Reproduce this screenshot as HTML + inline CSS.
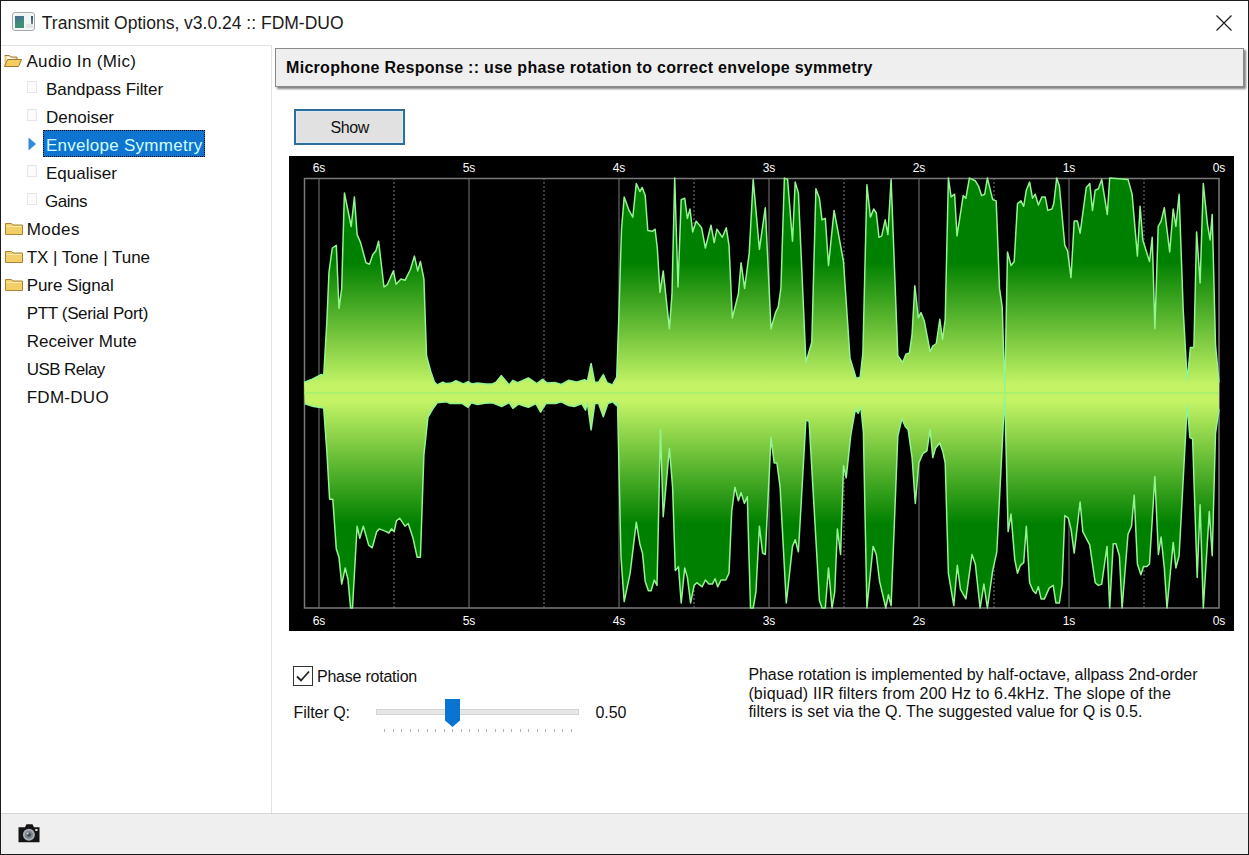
<!DOCTYPE html>
<html><head><meta charset="utf-8">
<style>
*{margin:0;padding:0;box-sizing:border-box}
html,body{width:1249px;height:855px;overflow:hidden;background:#fff;font-family:"Liberation Sans",sans-serif;color:#000}
.abs{position:absolute}
.t{position:absolute;white-space:nowrap;line-height:1}
</style></head><body>
<div class="abs" style="left:0;top:0;width:1249px;height:855px;border:1px solid #1c1c1c"></div>
<div class="abs" style="left:12px;top:12px;width:23px;height:19px;border:1px solid #a8a8a8;border-radius:3px;background:#f2f6f6"></div>
<div class="abs" style="left:15px;top:16px;width:9px;height:12px;background:linear-gradient(160deg,#4a6696,#3c9078 60%,#4a8a78)"></div>
<div class="abs" style="left:26px;top:24px;width:7px;height:4px;background:#e2e4e4"></div>
<div class="abs" style="left:31px;top:16px;width:2px;height:8px;background:linear-gradient(#3c4c58,#7a8a90)"></div>
<div class="t" style="left:41.8px;top:14.69px;font-size:17.5px;color:#1a1a1a;">Transmit Options, v3.0.24 :: FDM-DUO</div>
<svg class="abs" style="left:1214px;top:13px" width="20" height="20"><path d="M2.5 2.5L17.5 17.5M17.5 2.5L2.5 17.5" stroke="#1e1e1e" stroke-width="1.2"/></svg>
<div class="abs" style="left:1px;top:45px;width:271px;height:1px;background:#e2e2e2"></div>
<div class="abs" style="left:271px;top:45px;width:1px;height:768px;background:#e2e2e2"></div>
<svg class="abs" style="left:4px;top:54px" width="18" height="13" viewBox="0 0 18 13"><path d="M0.5 1.5h5l1.5 1.5h6v2.5" fill="#f0d890" stroke="#a08040" stroke-width="1"/><path d="M0.5 12.5V2h2v10.5z" fill="#e8c870"/><path d="M0.5 12.5L3.5 5.5h14l-3 7z" fill="#f4cc60" stroke="#a07830" stroke-width="1"/></svg>
<div class="t" style="left:26.4px;top:52.61px;font-size:17px;color:#111;letter-spacing:0.366px;">Audio In (Mic)</div>
<div class="abs" style="left:27px;top:81px;width:10px;height:12px;border:1px solid #e6e6e6;background:#fcfcfc"></div>
<div class="t" style="left:46px;top:80.61px;font-size:17px;color:#111;letter-spacing:-0.075px;">Bandpass Filter</div>
<div class="abs" style="left:27px;top:109px;width:10px;height:12px;border:1px solid #e6e6e6;background:#fcfcfc"></div>
<div class="t" style="left:46px;top:108.61px;font-size:17px;color:#111;">Denoiser</div>
<div class="abs" style="left:43px;top:130px;width:162px;height:27px;background:#0f73d0;border:1px dotted #000"></div>
<svg class="abs" style="left:28px;top:137px" width="9" height="14"><path d="M0.5 0.5L8 7L0.5 13.5z" fill="#2f8bdc"/></svg>
<div class="t" style="left:46px;top:136.61px;font-size:17px;color:#d0ffff;letter-spacing:0.264px;">Envelope Symmetry</div>
<div class="abs" style="left:27px;top:165px;width:10px;height:12px;border:1px solid #e6e6e6;background:#fcfcfc"></div>
<div class="t" style="left:46px;top:164.61px;font-size:17px;color:#111;">Equaliser</div>
<div class="abs" style="left:27px;top:193px;width:10px;height:12px;border:1px solid #e6e6e6;background:#fcfcfc"></div>
<div class="t" style="left:45px;top:192.61px;font-size:17px;color:#111;letter-spacing:-0.484px;">Gains</div>
<svg class="abs" style="left:5px;top:222px" width="18" height="13" viewBox="0 0 18 13"><path d="M0.5 12.5V1.5h6l1.5 1.5h9.5v9.5z" fill="#f2cf68" stroke="#a88434" stroke-width="1"/><path d="M1.5 4.5h15" stroke="#fbeab0" stroke-width="1"/></svg>
<div class="t" style="left:26.7px;top:220.61px;font-size:17px;color:#111;letter-spacing:0.454px;">Modes</div>
<svg class="abs" style="left:5px;top:250px" width="18" height="13" viewBox="0 0 18 13"><path d="M0.5 12.5V1.5h6l1.5 1.5h9.5v9.5z" fill="#f2cf68" stroke="#a88434" stroke-width="1"/><path d="M1.5 4.5h15" stroke="#fbeab0" stroke-width="1"/></svg>
<div class="t" style="left:26.7px;top:248.61px;font-size:17px;color:#111;letter-spacing:-0.033px;">TX | Tone | Tune</div>
<svg class="abs" style="left:5px;top:278px" width="18" height="13" viewBox="0 0 18 13"><path d="M0.5 12.5V1.5h6l1.5 1.5h9.5v9.5z" fill="#f2cf68" stroke="#a88434" stroke-width="1"/><path d="M1.5 4.5h15" stroke="#fbeab0" stroke-width="1"/></svg>
<div class="t" style="left:26.7px;top:276.61px;font-size:17px;color:#111;letter-spacing:-0.081px;">Pure Signal</div>
<div class="t" style="left:26.7px;top:304.61px;font-size:17px;color:#111;letter-spacing:-0.348px;">PTT (Serial Port)</div>
<div class="t" style="left:26.7px;top:332.61px;font-size:17px;color:#111;letter-spacing:0.030px;">Receiver Mute</div>
<div class="t" style="left:26.7px;top:360.61px;font-size:17px;color:#111;letter-spacing:-0.571px;">USB Relay</div>
<div class="t" style="left:26.7px;top:388.61px;font-size:17px;color:#111;letter-spacing:0.276px;">FDM-DUO</div>
<div class="abs" style="left:1px;top:813px;width:1247px;height:41px;background:#efefef;border-top:1px solid #d6d6d6"></div>
<svg class="abs" style="left:17px;top:823px" width="24" height="21" viewBox="0 0 24 21"><path d="M1.5 4.3h6.5l1.5-3h6l1.5 3h5.5v15H1.5z" fill="#151515"/><circle cx="11.9" cy="11.7" r="6" fill="#a9adb1"/><circle cx="11.9" cy="11.7" r="4" fill="#7c858c"/><circle cx="11.9" cy="11.7" r="2" fill="#3e4850"/><circle cx="10.6" cy="10.4" r="1" fill="#d8e0e8"/><rect x="18.3" y="6" width="2.2" height="2" fill="#e8e8e8"/></svg>
<div class="abs" style="left:275px;top:48px;width:969px;height:39px;background:#efefef;border:1px solid #8a8a8a;box-shadow:2px 2px 2px rgba(0,0,0,0.5)"></div>
<div class="t" style="left:286px;top:60.16px;font-size:16px;color:#0a0a0a;font-weight:bold;letter-spacing:0.303px;">Microphone Response :: use phase rotation to correct envelope symmetry</div>
<div class="abs" style="left:294px;top:109px;width:111px;height:36px;border:2px solid #2f6d98;background:#e1e1e1;box-shadow:inset 0 0 0 1px #d6ecfb"></div>
<div class="t" style="left:330.4px;top:120.46px;font-size:16px;color:#111;letter-spacing:-0.357px;">Show</div>
<svg class="abs" style="left:289px;top:156px" width="945" height="475" viewBox="289 156 945 475">
<defs><linearGradient id="g" gradientUnits="userSpaceOnUse" x1="0" y1="178" x2="0" y2="608"><stop offset="0.0000" stop-color="#008000"/><stop offset="0.1953" stop-color="#008000"/><stop offset="0.4814" stop-color="#c4f466"/><stop offset="0.5186" stop-color="#c4f466"/><stop offset="0.8047" stop-color="#008000"/><stop offset="1.0000" stop-color="#008000"/></linearGradient></defs>
<rect x="289" y="156" width="945" height="475" fill="#000"/>
<line x1="319" y1="178" x2="319" y2="608" stroke="#5e5e5e" stroke-width="1.3"/><line x1="469" y1="178" x2="469" y2="608" stroke="#5e5e5e" stroke-width="1.3"/><line x1="619" y1="178" x2="619" y2="608" stroke="#5e5e5e" stroke-width="1.3"/><line x1="769" y1="178" x2="769" y2="608" stroke="#5e5e5e" stroke-width="1.3"/><line x1="919" y1="178" x2="919" y2="608" stroke="#5e5e5e" stroke-width="1.3"/><line x1="1069" y1="178" x2="1069" y2="608" stroke="#5e5e5e" stroke-width="1.3"/><line x1="394" y1="178" x2="394" y2="608" stroke="#5e5e5e" stroke-width="1.3" stroke-dasharray="2 2"/><line x1="544" y1="178" x2="544" y2="608" stroke="#5e5e5e" stroke-width="1.3" stroke-dasharray="2 2"/><line x1="694" y1="178" x2="694" y2="608" stroke="#5e5e5e" stroke-width="1.3" stroke-dasharray="2 2"/><line x1="844" y1="178" x2="844" y2="608" stroke="#5e5e5e" stroke-width="1.3" stroke-dasharray="2 2"/><line x1="994" y1="178" x2="994" y2="608" stroke="#5e5e5e" stroke-width="1.3" stroke-dasharray="2 2"/><line x1="1144" y1="178" x2="1144" y2="608" stroke="#5e5e5e" stroke-width="1.3" stroke-dasharray="2 2"/>
<rect x="304.5" y="178.5" width="914.5" height="429.5" fill="none" stroke="#7a7a7a" stroke-width="1.5"/>
<path d="M304 382.5 L310.8 379.8 L321.5 374.5 L323.7 375.8 L326.9 320.7 L329 272 L332.3 248 L336.3 245.3 L339 308.5 L341.7 288.4 L344.4 192.9 L351.2 226.5 L354.4 196.9 L357.1 234.6 L360.6 242.6 L366 262.8 L369.5 264.2 L372.7 254.7 L375.9 250.7 L378.6 241.3 L384 287 L387.5 284.3 L393.4 270.9 L396.1 284.3 L401 279 L405 280.3 L410.4 269.5 L414.4 256.1 L417.7 270.9 L420.4 261.5 L423.9 279 L426.5 355.6 L430.6 370.9 L434.4 382.1 L437.2 384.9 L442.8 382.1 L445.6 383.5 L451.2 383.1 L455.9 380.7 L463.4 384 L468 381.7 L471.8 384 L477.4 383.1 L485.8 384 L492.4 384 L496.1 382.1 L501.2 375.6 L509.2 384.9 L512.9 380.3 L517.6 382.6 L522.3 380.7 L528.4 377.9 L536.8 383.5 L542.5 379.3 L547.1 383.1 L555.5 382.6 L561.2 384.5 L568.6 380.3 L576.1 382.1 L584.5 379.8 L587.4 381.2 L591.1 363.4 L594.8 382.6 L598.6 382.1 L603.3 374.6 L607 382.6 L612.6 384.9 L616.7 377.2 L618.8 318 L621.5 229.2 L624.2 196.9 L629 210.4 L632.8 217.1 L636.3 183.5 L639.8 191.5 L642.2 187.5 L645.2 195.6 L647.8 230.5 L652.4 231.3 L655.1 229.2 L657.3 248 L660 292.4 L663.2 270.9 L669.4 328.7 L672 293.8 L674.7 178.1 L678 287 L681.2 199.6 L684.7 198.2 L687.4 218.4 L690 209 L692.7 231.9 L696.2 221.1 L701.6 227.8 L705.4 248 L711 225.2 L714.2 242.6 L716.9 229.2 L722.3 237.3 L726.3 227.8 L729 245.3 L732.3 318 L738.4 293.8 L741.1 262.8 L744.6 288.4 L749.2 253.4 L753.2 179.4 L759.4 249.4 L765.3 207.7 L771 328.7 L775.5 312.6 L778.2 307.2 L780.9 288.4 L784.4 178.1 L787.6 179.4 L792.5 241.3 L795.2 182.1 L798.4 192.9 L805.9 362.4 L811.8 342.2 L815.9 188.8 L819.4 198.2 L822 219.8 L825.3 218.4 L828.5 265.5 L834.1 210.4 L843.5 261.5 L850 358.3 L856.2 378.5 L860.2 377.2 L862.9 353 L866.9 184.8 L870.4 217.1 L873.7 209 L876.3 213 L879 237.3 L881.7 235.9 L885.2 219.8 L887.9 234.6 L891.1 179.4 L897.8 355.6 L902.7 362.4 L905.9 354.3 L909.4 353 L912.1 334.1 L914.8 285.7 L918.3 318 L921 312.6 L924.2 320.7 L930.1 351.6 L932.8 346.2 L936.3 343.5 L939.8 319.3 L942.5 339.5 L945.2 319.3 L948.4 178.1 L951.1 196.9 L954.6 194.2 L957 235.9 L963.2 195.6 L965.9 198.2 L969.4 178.1 L975.3 180.8 L978.5 186.1 L981.5 195.6 L984.7 194.2 L987.4 178.1 L992.7 199.6 L996.2 200.9 L999.5 288.4 L1002.2 307.2 L1004.8 392 L1007.5 252 L1011 265.5 L1014.2 261.5 L1017.5 203.6 L1021 200.9 L1023.7 206.3 L1026.3 190.2 L1029.6 182.1 L1032.5 198.2 L1035.2 194.2 L1038.4 205 L1041.9 196.9 L1045.2 196.9 L1047.8 210.4 L1051.9 209 L1053.8 203.6 L1056.7 178.1 L1059.4 186.1 L1064.8 245.3 L1067.5 250.7 L1071 277.6 L1074.2 221.1 L1077.4 221.1 L1080.1 233.2 L1086.3 187.5 L1089.8 183.5 L1092.5 210.4 L1095.2 190.2 L1098.4 188.8 L1101.7 179.4 L1107.3 214.4 L1109.7 178.1 L1128 179.4 L1132.1 194.2 L1137.4 256.1 L1140.1 206.3 L1142.8 240 L1149.5 261.5 L1152.2 237.3 L1154.9 328.7 L1158.2 226.5 L1161.1 221.1 L1164.3 207.7 L1169.7 252 L1173.2 209 L1175.9 226.5 L1179.1 194.2 L1183.2 309.9 L1187.2 381 L1190.4 347.6 L1193.9 347.6 L1196.6 231.9 L1200.1 283 L1203.3 183.5 L1207.4 223.8 L1210.1 240 L1212.2 214.4 L1215.5 344.9 L1219 382.5 L1219 409.2 L1215.5 433.4 L1212.2 555.8 L1209.3 511.4 L1203.3 608 L1200.1 504.7 L1197.2 577.4 L1192.6 438.9 L1189.9 437.5 L1187.2 405 L1179.1 555.8 L1175.9 567.9 L1173.2 542.4 L1167 608 L1164.3 567.9 L1161.1 537 L1158.4 554.5 L1154.9 476.5 L1149.5 563.9 L1146.9 566.6 L1143.6 566.6 L1140.9 574.7 L1137.4 563.9 L1134.2 495.3 L1131.5 526.2 L1128 534.3 L1122.1 608 L1119.4 555.8 L1115.9 543.7 L1113.2 543.7 L1109.7 608 L1107 546.4 L1101.7 584.1 L1098.4 585.4 L1095.2 582.7 L1089.8 545.1 L1086.3 538.3 L1082.8 531.6 L1080.1 502 L1074.2 553.1 L1071 528.9 L1068.3 518.2 L1064.8 515.5 L1062.1 584.1 L1059.4 602.9 L1055.9 602.9 L1053.2 585.4 L1049.2 588.1 L1044.4 598.9 L1041.1 598.9 L1038.4 586.8 L1035.8 593.5 L1033.1 590.8 L1029.6 582.7 L1026.3 526.2 L1023.7 562.6 L1020.4 565.3 L1017.5 573.3 L1014.8 559.9 L1011 514.1 L1008.1 531.6 L1004.8 394 L996.8 551.8 L992.7 570.6 L987.4 608 L983.9 584.1 L980.1 608 L975.3 563.9 L972 554.5 L965.9 598.9 L960.5 589.5 L957.3 565.3 L953.8 605.6 L948.4 573.3 L945.2 463 L943 452.3 L939.8 442.8 L935.5 448.2 L932.8 457.6 L930.1 429.4 L926.9 450.9 L922.8 453.6 L918.8 463 L915.3 503.4 L912.1 457.6 L908.1 429.4 L905.4 426.7 L901.9 418.6 L897.8 436.1 L891.1 605.6 L888.4 594.8 L885.8 608 L879.6 581.4 L876.3 554.5 L873.1 546.4 L866.9 608 L863.4 432.1 L860.8 406.5 L858.3 413.2 L855.4 409.2 L850.8 434.8 L846.2 477.8 L843.5 465.7 L840.6 554.5 L837.4 528.9 L834.7 592.2 L832 608 L828.5 567.9 L825.3 608 L822 608 L819.4 600.2 L809.1 421.3 L805.9 420 L798.4 551.8 L795.2 539.7 L792.5 546.4 L786.3 602.9 L780.1 487.2 L776.9 463 L774.2 463 L771 437.5 L765.3 554.5 L762.6 553.1 L759.4 526.2 L755.9 592.2 L753.2 608 L750.5 608 L747.3 496.7 L744.4 503.4 L741.1 492.6 L738.4 500.7 L734.9 487.2 L731.7 511.4 L729 573.3 L725.8 580 L721 580 L717.7 586.8 L715.1 578.7 L712.4 584.1 L708.9 584.1 L705.4 580 L702.2 586.8 L696.8 582.7 L694.1 585.4 L690.6 602.9 L687.4 577.4 L684.7 568 L681.2 602.9 L678.5 566.6 L675.3 570.6 L672.6 487.2 L669.4 448.2 L663.2 516.8 L660.5 429.4 L657 585.4 L654.3 580 L651.1 590.8 L648.4 590.8 L645.2 581.4 L642.5 553.1 L639.8 543.7 L636.3 522.2 L630.1 573.3 L624.2 601.6 L621 557.2 L617.5 402.5 L616.4 405.5 L612.6 401.8 L607.9 403.6 L603.3 416.7 L598.6 403.6 L594.8 403.6 L591.1 429.8 L587.4 402.7 L585.5 410.2 L581.7 403.6 L574.3 406.5 L568.6 405.5 L561.2 401.8 L555.5 403.6 L546.2 403.2 L540.6 412.1 L535.9 403.6 L528.4 407.4 L524.2 406 L518.5 404.1 L512.9 408.3 L509.2 402.7 L501.7 406.5 L492.4 402.7 L484.9 403.2 L477.4 404.6 L471.3 402.7 L468 407.4 L462.4 403.6 L450.3 403.6 L446.5 401.8 L437.2 402.7 L432.5 409.3 L427.9 417.3 L423.9 455 L420.4 557.2 L417.1 557.2 L413.1 538.3 L408.2 523.5 L405 526.2 L399.6 518.2 L396.4 520.9 L394.2 531.6 L391.5 528.9 L388.9 533 L386.2 531.6 L379.4 528.9 L376.7 531.6 L372.2 547.8 L368.7 545.1 L363.3 526.2 L359.8 538.3 L357.1 526.2 L352.5 608 L350.6 608 L347.9 578.7 L345.2 568 L341.7 584.1 L339 557.2 L336.3 549.1 L332.8 499.3 L329.6 499.3 L326.9 452.3 L323.7 407.9 L313.5 406.5 L304.8 403.8Z" fill="url(#g)"/>
<path d="M304 382.5 L310.8 379.8 L321.5 374.5 L323.7 375.8 L326.9 320.7 L329 272 L332.3 248 L336.3 245.3 L339 308.5 L341.7 288.4 L344.4 192.9 L351.2 226.5 L354.4 196.9 L357.1 234.6 L360.6 242.6 L366 262.8 L369.5 264.2 L372.7 254.7 L375.9 250.7 L378.6 241.3 L384 287 L387.5 284.3 L393.4 270.9 L396.1 284.3 L401 279 L405 280.3 L410.4 269.5 L414.4 256.1 L417.7 270.9 L420.4 261.5 L423.9 279 L426.5 355.6 L430.6 370.9 L434.4 382.1 L437.2 384.9 L442.8 382.1 L445.6 383.5 L451.2 383.1 L455.9 380.7 L463.4 384 L468 381.7 L471.8 384 L477.4 383.1 L485.8 384 L492.4 384 L496.1 382.1 L501.2 375.6 L509.2 384.9 L512.9 380.3 L517.6 382.6 L522.3 380.7 L528.4 377.9 L536.8 383.5 L542.5 379.3 L547.1 383.1 L555.5 382.6 L561.2 384.5 L568.6 380.3 L576.1 382.1 L584.5 379.8 L587.4 381.2 L591.1 363.4 L594.8 382.6 L598.6 382.1 L603.3 374.6 L607 382.6 L612.6 384.9 L616.7 377.2 L618.8 318 L621.5 229.2 L624.2 196.9 L629 210.4 L632.8 217.1 L636.3 183.5 L639.8 191.5 L642.2 187.5 L645.2 195.6 L647.8 230.5 L652.4 231.3 L655.1 229.2 L657.3 248 L660 292.4 L663.2 270.9 L669.4 328.7 L672 293.8 L674.7 178.1 L678 287 L681.2 199.6 L684.7 198.2 L687.4 218.4 L690 209 L692.7 231.9 L696.2 221.1 L701.6 227.8 L705.4 248 L711 225.2 L714.2 242.6 L716.9 229.2 L722.3 237.3 L726.3 227.8 L729 245.3 L732.3 318 L738.4 293.8 L741.1 262.8 L744.6 288.4 L749.2 253.4 L753.2 179.4 L759.4 249.4 L765.3 207.7 L771 328.7 L775.5 312.6 L778.2 307.2 L780.9 288.4 L784.4 178.1 L787.6 179.4 L792.5 241.3 L795.2 182.1 L798.4 192.9 L805.9 362.4 L811.8 342.2 L815.9 188.8 L819.4 198.2 L822 219.8 L825.3 218.4 L828.5 265.5 L834.1 210.4 L843.5 261.5 L850 358.3 L856.2 378.5 L860.2 377.2 L862.9 353 L866.9 184.8 L870.4 217.1 L873.7 209 L876.3 213 L879 237.3 L881.7 235.9 L885.2 219.8 L887.9 234.6 L891.1 179.4 L897.8 355.6 L902.7 362.4 L905.9 354.3 L909.4 353 L912.1 334.1 L914.8 285.7 L918.3 318 L921 312.6 L924.2 320.7 L930.1 351.6 L932.8 346.2 L936.3 343.5 L939.8 319.3 L942.5 339.5 L945.2 319.3 L948.4 178.1 L951.1 196.9 L954.6 194.2 L957 235.9 L963.2 195.6 L965.9 198.2 L969.4 178.1 L975.3 180.8 L978.5 186.1 L981.5 195.6 L984.7 194.2 L987.4 178.1 L992.7 199.6 L996.2 200.9 L999.5 288.4 L1002.2 307.2 L1004.8 392 L1007.5 252 L1011 265.5 L1014.2 261.5 L1017.5 203.6 L1021 200.9 L1023.7 206.3 L1026.3 190.2 L1029.6 182.1 L1032.5 198.2 L1035.2 194.2 L1038.4 205 L1041.9 196.9 L1045.2 196.9 L1047.8 210.4 L1051.9 209 L1053.8 203.6 L1056.7 178.1 L1059.4 186.1 L1064.8 245.3 L1067.5 250.7 L1071 277.6 L1074.2 221.1 L1077.4 221.1 L1080.1 233.2 L1086.3 187.5 L1089.8 183.5 L1092.5 210.4 L1095.2 190.2 L1098.4 188.8 L1101.7 179.4 L1107.3 214.4 L1109.7 178.1 L1128 179.4 L1132.1 194.2 L1137.4 256.1 L1140.1 206.3 L1142.8 240 L1149.5 261.5 L1152.2 237.3 L1154.9 328.7 L1158.2 226.5 L1161.1 221.1 L1164.3 207.7 L1169.7 252 L1173.2 209 L1175.9 226.5 L1179.1 194.2 L1183.2 309.9 L1187.2 381 L1190.4 347.6 L1193.9 347.6 L1196.6 231.9 L1200.1 283 L1203.3 183.5 L1207.4 223.8 L1210.1 240 L1212.2 214.4 L1215.5 344.9 L1219 382.5" fill="none" stroke="#94f490" stroke-width="1.5" stroke-linejoin="round"/>
<path d="M304.8 403.8 L313.5 406.5 L323.7 407.9 L326.9 452.3 L329.6 499.3 L332.8 499.3 L336.3 549.1 L339 557.2 L341.7 584.1 L345.2 568 L347.9 578.7 L350.6 608 L352.5 608 L357.1 526.2 L359.8 538.3 L363.3 526.2 L368.7 545.1 L372.2 547.8 L376.7 531.6 L379.4 528.9 L386.2 531.6 L388.9 533 L391.5 528.9 L394.2 531.6 L396.4 520.9 L399.6 518.2 L405 526.2 L408.2 523.5 L413.1 538.3 L417.1 557.2 L420.4 557.2 L423.9 455 L427.9 417.3 L432.5 409.3 L437.2 402.7 L446.5 401.8 L450.3 403.6 L462.4 403.6 L468 407.4 L471.3 402.7 L477.4 404.6 L484.9 403.2 L492.4 402.7 L501.7 406.5 L509.2 402.7 L512.9 408.3 L518.5 404.1 L524.2 406 L528.4 407.4 L535.9 403.6 L540.6 412.1 L546.2 403.2 L555.5 403.6 L561.2 401.8 L568.6 405.5 L574.3 406.5 L581.7 403.6 L585.5 410.2 L587.4 402.7 L591.1 429.8 L594.8 403.6 L598.6 403.6 L603.3 416.7 L607.9 403.6 L612.6 401.8 L616.4 405.5 L617.5 402.5 L621 557.2 L624.2 601.6 L630.1 573.3 L636.3 522.2 L639.8 543.7 L642.5 553.1 L645.2 581.4 L648.4 590.8 L651.1 590.8 L654.3 580 L657 585.4 L660.5 429.4 L663.2 516.8 L669.4 448.2 L672.6 487.2 L675.3 570.6 L678.5 566.6 L681.2 602.9 L684.7 568 L687.4 577.4 L690.6 602.9 L694.1 585.4 L696.8 582.7 L702.2 586.8 L705.4 580 L708.9 584.1 L712.4 584.1 L715.1 578.7 L717.7 586.8 L721 580 L725.8 580 L729 573.3 L731.7 511.4 L734.9 487.2 L738.4 500.7 L741.1 492.6 L744.4 503.4 L747.3 496.7 L750.5 608 L753.2 608 L755.9 592.2 L759.4 526.2 L762.6 553.1 L765.3 554.5 L771 437.5 L774.2 463 L776.9 463 L780.1 487.2 L786.3 602.9 L792.5 546.4 L795.2 539.7 L798.4 551.8 L805.9 420 L809.1 421.3 L819.4 600.2 L822 608 L825.3 608 L828.5 567.9 L832 608 L834.7 592.2 L837.4 528.9 L840.6 554.5 L843.5 465.7 L846.2 477.8 L850.8 434.8 L855.4 409.2 L858.3 413.2 L860.8 406.5 L863.4 432.1 L866.9 608 L873.1 546.4 L876.3 554.5 L879.6 581.4 L885.8 608 L888.4 594.8 L891.1 605.6 L897.8 436.1 L901.9 418.6 L905.4 426.7 L908.1 429.4 L912.1 457.6 L915.3 503.4 L918.8 463 L922.8 453.6 L926.9 450.9 L930.1 429.4 L932.8 457.6 L935.5 448.2 L939.8 442.8 L943 452.3 L945.2 463 L948.4 573.3 L953.8 605.6 L957.3 565.3 L960.5 589.5 L965.9 598.9 L972 554.5 L975.3 563.9 L980.1 608 L983.9 584.1 L987.4 608 L992.7 570.6 L996.8 551.8 L1004.8 394 L1008.1 531.6 L1011 514.1 L1014.8 559.9 L1017.5 573.3 L1020.4 565.3 L1023.7 562.6 L1026.3 526.2 L1029.6 582.7 L1033.1 590.8 L1035.8 593.5 L1038.4 586.8 L1041.1 598.9 L1044.4 598.9 L1049.2 588.1 L1053.2 585.4 L1055.9 602.9 L1059.4 602.9 L1062.1 584.1 L1064.8 515.5 L1068.3 518.2 L1071 528.9 L1074.2 553.1 L1080.1 502 L1082.8 531.6 L1086.3 538.3 L1089.8 545.1 L1095.2 582.7 L1098.4 585.4 L1101.7 584.1 L1107 546.4 L1109.7 608 L1113.2 543.7 L1115.9 543.7 L1119.4 555.8 L1122.1 608 L1128 534.3 L1131.5 526.2 L1134.2 495.3 L1137.4 563.9 L1140.9 574.7 L1143.6 566.6 L1146.9 566.6 L1149.5 563.9 L1154.9 476.5 L1158.4 554.5 L1161.1 537 L1164.3 567.9 L1167 608 L1173.2 542.4 L1175.9 567.9 L1179.1 555.8 L1187.2 405 L1189.9 437.5 L1192.6 438.9 L1197.2 577.4 L1200.1 504.7 L1203.3 608 L1209.3 511.4 L1212.2 555.8 L1215.5 433.4 L1219 409.2" fill="none" stroke="#94f490" stroke-width="1.5" stroke-linejoin="round"/>
<line x1="304" y1="393" x2="1219" y2="393" stroke="#a0f070" stroke-width="1.6"/>
<g font-family="Liberation Sans, sans-serif" font-size="12" fill="#fff"><text x="319" y="172" text-anchor="middle">6s</text><text x="319" y="625" text-anchor="middle">6s</text><text x="469" y="172" text-anchor="middle">5s</text><text x="469" y="625" text-anchor="middle">5s</text><text x="619" y="172" text-anchor="middle">4s</text><text x="619" y="625" text-anchor="middle">4s</text><text x="769" y="172" text-anchor="middle">3s</text><text x="769" y="625" text-anchor="middle">3s</text><text x="919" y="172" text-anchor="middle">2s</text><text x="919" y="625" text-anchor="middle">2s</text><text x="1069" y="172" text-anchor="middle">1s</text><text x="1069" y="625" text-anchor="middle">1s</text><text x="1219" y="172" text-anchor="middle">0s</text><text x="1219" y="625" text-anchor="middle">0s</text></g>
</svg>
<div class="abs" style="left:293px;top:666px;width:20px;height:20px;border:1px solid #333;background:#fff"></div>
<svg class="abs" style="left:293px;top:666px" width="20" height="20"><path d="M4 10.5L8 14.5L16 5.5" fill="none" stroke="#222" stroke-width="1.8"/></svg>
<div class="t" style="left:317px;top:669.46px;font-size:16px;color:#111;letter-spacing:-0.228px;">Phase rotation</div>
<div class="t" style="left:293.4px;top:705.46px;font-size:16px;color:#111;letter-spacing:-0.032px;">Filter Q:</div>
<div class="abs" style="left:376px;top:709px;width:203px;height:6px;background:#e7e7e7;border:1px solid #d4d4d4"></div>
<svg class="abs" style="left:444px;top:698px" width="18" height="30"><path d="M1 1h15v21.5l-7.5 6.5l-7.5-6.5z" fill="#0a74d2"/></svg>
<svg class="abs" style="left:0;top:0" width="1249" height="855"><rect x="384" y="729" width="1" height="3" fill="#b4b4b4"/><rect x="393" y="729" width="1" height="3" fill="#b4b4b4"/><rect x="401" y="729" width="1" height="3" fill="#b4b4b4"/><rect x="410" y="729" width="1" height="3" fill="#b4b4b4"/><rect x="418" y="729" width="1" height="3" fill="#b4b4b4"/><rect x="427" y="729" width="1" height="3" fill="#b4b4b4"/><rect x="435" y="729" width="1" height="3" fill="#b4b4b4"/><rect x="444" y="729" width="1" height="3" fill="#b4b4b4"/><rect x="452" y="729" width="1" height="3" fill="#b4b4b4"/><rect x="461" y="729" width="1" height="3" fill="#b4b4b4"/><rect x="469" y="729" width="1" height="3" fill="#b4b4b4"/><rect x="478" y="729" width="1" height="3" fill="#b4b4b4"/><rect x="486" y="729" width="1" height="3" fill="#b4b4b4"/><rect x="495" y="729" width="1" height="3" fill="#b4b4b4"/><rect x="503" y="729" width="1" height="3" fill="#b4b4b4"/><rect x="511" y="729" width="1" height="3" fill="#b4b4b4"/><rect x="520" y="729" width="1" height="3" fill="#b4b4b4"/><rect x="528" y="729" width="1" height="3" fill="#b4b4b4"/><rect x="537" y="729" width="1" height="3" fill="#b4b4b4"/><rect x="545" y="729" width="1" height="3" fill="#b4b4b4"/><rect x="554" y="729" width="1" height="3" fill="#b4b4b4"/><rect x="562" y="729" width="1" height="3" fill="#b4b4b4"/><rect x="571" y="729" width="1" height="3" fill="#b4b4b4"/></svg>
<div class="t" style="left:595.4px;top:705.46px;font-size:16px;color:#111;letter-spacing:-0.035px;">0.50</div>
<div class="t" style="left:748.4px;top:667.16px;font-size:16px;color:#111;letter-spacing:-0.044px;">Phase rotation is implemented by half-octave, allpass 2nd-order</div>
<div class="t" style="left:748.4px;top:685.66px;font-size:16px;color:#111;letter-spacing:0.156px;">(biquad) IIR filters from 200 Hz to 6.4kHz. The slope of the</div>
<div class="t" style="left:748.4px;top:704.16px;font-size:16px;color:#111;letter-spacing:0.021px;">filters is set via the Q. The suggested value for Q is 0.5.</div>
</body></html>
